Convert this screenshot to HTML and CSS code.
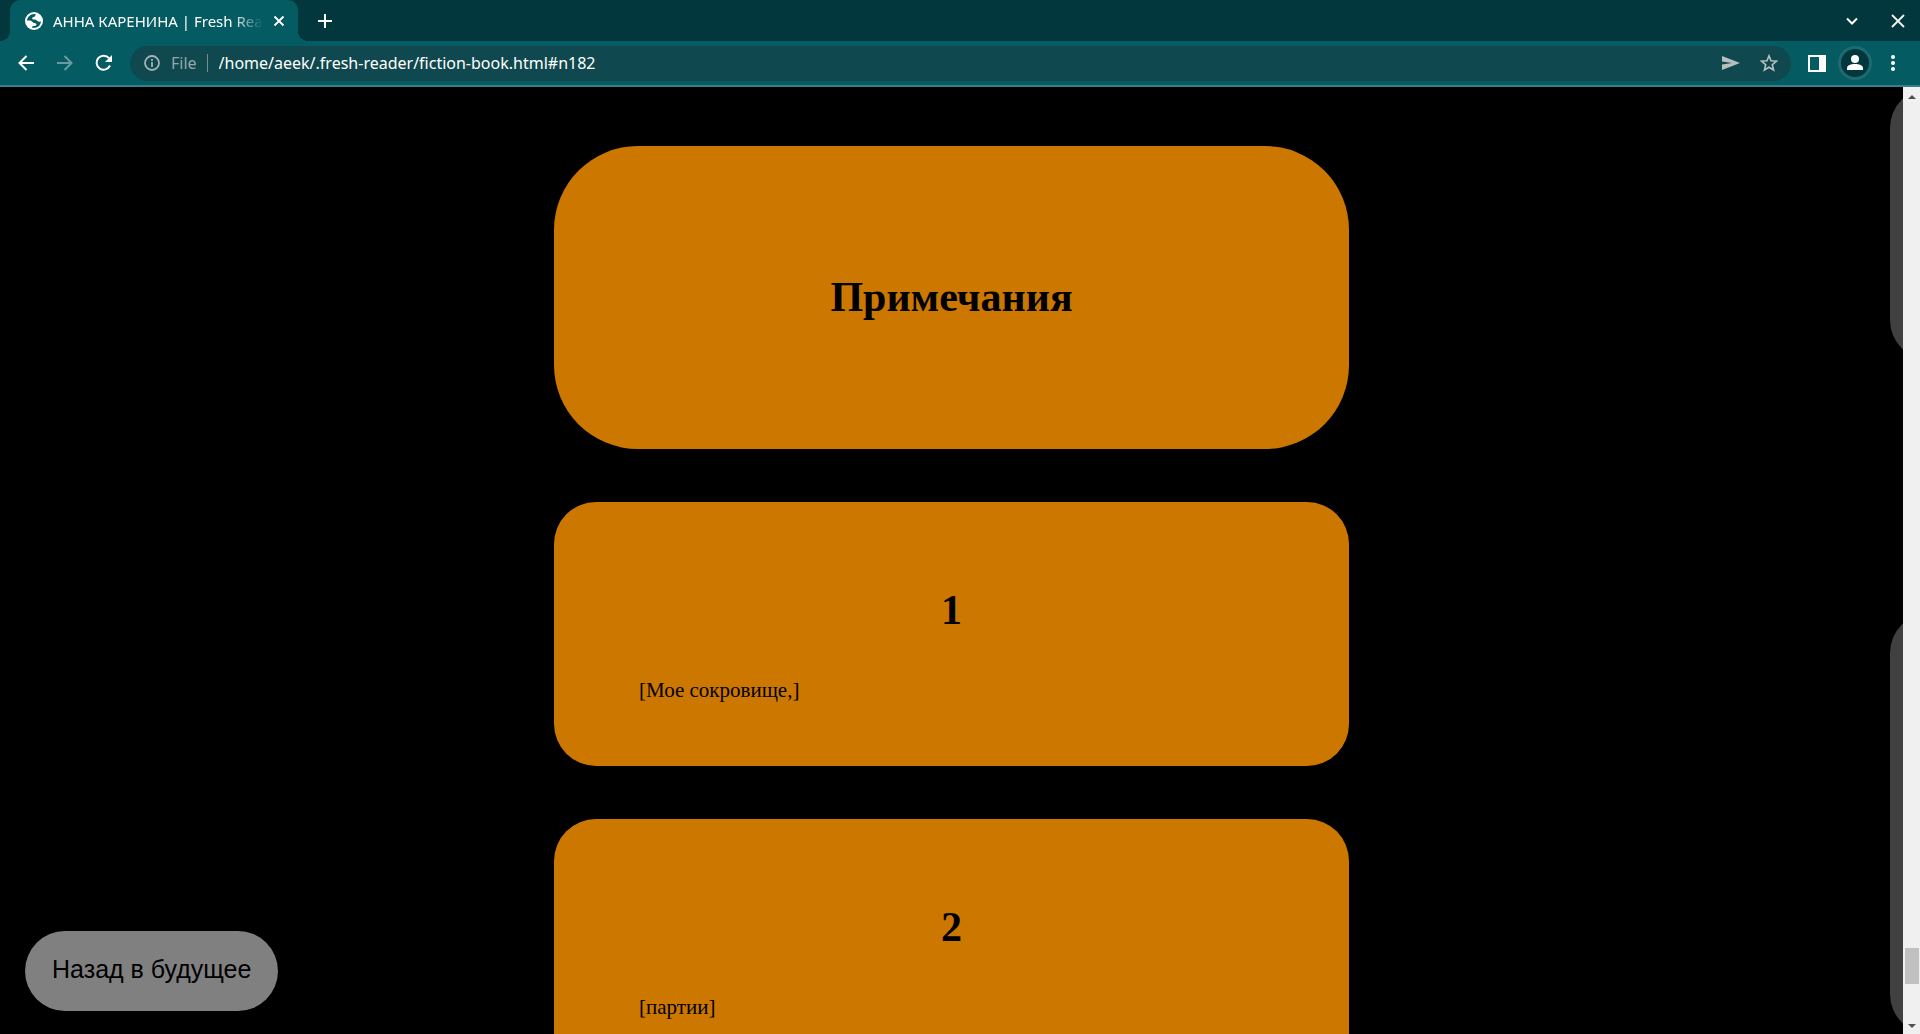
FILE: index.html
```html
<!DOCTYPE html>
<html lang="ru">
<head>
<meta charset="utf-8">
<title>АННА КАРЕНИНА | Fresh Reader</title>
<link rel="stylesheet" href="styles.css">
</head>
<body class="browser">
<header class="chrome">
  <div class="tabstrip">
    <div class="tab">
      <svg class="favicon" width="20" height="20" viewBox="0 0 20 20"><circle cx="10" cy="10" r="9" fill="#fff"/><path d="M11.500 3C7 2.500 3.500 5.500 3 9.500h3c1.500 0 2 1 3 2s3.500.5 3.500 2-1.500 1.500-4 1.700L8 16.800c4.500.8 8.700-2 9-6.300-1.500.5-3 .3-3.800-.7S11 8.500 9.500 8.500 7.500 6.800 9 6.300s2.700-1 2.500-3.300z" fill="#055b62"/></svg>
      <span class="tab-title">АННА КАРЕНИНА | Fresh Reader</span>
      <button class="icon-button tab-close" aria-label="Закрыть вкладку"><svg width="12" height="12" viewBox="0 0 12 12"><path d="M1.500 1.500l9 9m0-9l-9 9" stroke="#fff" stroke-width="1.800"/></svg></button>
    </div>
    <button class="icon-button new-tab" aria-label="Новая вкладка"><svg width="14" height="14" viewBox="0 0 14 14"><path d="M7 0v14M0 7h14" stroke="#fff" stroke-width="2"/></svg></button>
    <div class="window-controls">
      <button class="icon-button" aria-label="Поиск вкладок"><svg width="14" height="14" viewBox="0 0 14 14"><path d="M2 4.500l5 5 5-5" fill="none" stroke="#fff" stroke-width="2"/></svg></button>
      <button class="icon-button" aria-label="Закрыть окно"><svg width="14" height="14" viewBox="0 0 14 14"><path d="M1 1l12 12M13 1L1 13" stroke="#f4f4f0" stroke-width="1.800"/></svg></button>
    </div>
  </div>
  <div class="toolbar">
    <button class="icon-button nav-button" aria-label="Назад"><svg width="16" height="16" viewBox="0 0 16 16"><path d="M16 8H2M8.500 1L1.500 8l7 7" fill="none" stroke="#fff" stroke-width="2"/></svg></button>
    <button class="icon-button nav-button" aria-label="Вперёд"><svg width="16" height="16" viewBox="0 0 16 16"><path d="M0 8h14M7.500 1l7 7-7 7" fill="none" stroke="#6b9ba0" stroke-width="2"/></svg></button>
    <button class="icon-button nav-button" aria-label="Обновить"><svg width="18" height="18" viewBox="0 0 18 18"><path d="M15 11.500A7 7 0 1 1 14 4.200" fill="none" stroke="#fff" stroke-width="2"/><path d="M17 1v7h-7z" fill="#fff"/></svg></button>
    <div class="omnibox">
      <svg width="16" height="16" viewBox="0 0 16 16"><circle cx="8" cy="8" r="7" fill="none" stroke="#a3b2b5" stroke-width="1.800"/><path d="M8 7v5M8 4v2" stroke="#a3b2b5" stroke-width="1.800"/></svg>
      <label class="scheme" for="address">File</label>
      <input class="address" id="address" type="text" value="/home/aeek/.fresh-reader/fiction-book.html#n182">
      <button class="icon-button" aria-label="Отправить"><svg width="18" height="16" viewBox="0 0 18 16"><path d="M0 1l18 7-18 7V9.500L10 8 0 6.500z" fill="#b9bfbd"/></svg></button>
      <button class="icon-button" aria-label="В закладки"><svg width="18" height="18" viewBox="0 0 18 18"><path d="M9 1.800l2 5 5.400.4-4.100 3.500 1.300 5.300L9 13.200 4.400 16l1.300-5.300-4.100-3.500L7 6.800z" fill="none" stroke="#b9bfbd" stroke-width="1.600"/></svg></button>
    </div>
    <button class="icon-button side-panel" aria-label="Боковая панель"><svg width="18" height="18" viewBox="0 0 18 18"><path fill-rule="evenodd" d="M0 1h18v17H0zM2 3v13h9V3z" fill="#fff"/></svg></button>
    <button class="icon-button profile" aria-label="Профиль"><svg width="18" height="18" viewBox="0 0 18 18"><circle cx="9" cy="5" r="4" fill="#fff"/><path d="M1 16v-2c0-2.600 4-4 8-4s8 1.400 8 4v2z" fill="#fff"/></svg></button>
    <button class="icon-button menu" aria-label="Меню"><svg width="4" height="16" viewBox="0 0 4 16"><g fill="#fff"><circle cx="2" cy="2" r="2"/><circle cx="2" cy="8" r="2"/><circle cx="2" cy="14" r="2"/></g></svg></button>
  </div>
</header>
<div class="viewport">
  <main class="page">
    <section class="card card-title"><h1 class="heading">Примечания</h1></section>
    <section class="card"><h2 class="heading">1</h2><p class="note">[Мое сокровище,]</p></section>
    <section class="card"><h2 class="heading">2</h2><p class="note">[партии]</p></section>
    <div class="edge-panel edge-top"></div>
    <div class="edge-panel edge-bottom"></div>
    <a class="back-link" href="#back">Назад в будущее</a>
  </main>
  <div class="scrollbar">
    <svg width="8" height="4" viewBox="0 0 8 4"><path d="M0 4l4-4 4 4z" fill="#505050"/></svg>
    <div class="track"><div class="thumb"></div></div>
    <svg width="8" height="4" viewBox="0 0 8 4"><path d="M0 0l4 4 4-4z" fill="#505050"/></svg>
  </div>
</div>
</body>
</html>
```
FILE: styles.css
```css
* { box-sizing: border-box; }
.browser {
  margin: 0;
  height: 100vh;
  display: flex;
  flex-direction: column;
  overflow: hidden;
  background: #000;
  font-family: "Noto Sans", sans-serif;
}
.icon-button {
  display: flex;
  align-items: center;
  justify-content: center;
  padding: 0;
  border: 0;
  background: none;
}
.tabstrip {
  display: flex;
  align-items: center;
  height: 41px;
  padding: 0 15px 0 10px;
  background: #02383d;
}
.tab {
  position: relative;
  display: flex;
  align-items: center;
  width: 288px;
  height: 41px;
  padding: 0 13px 0 14px;
  border-radius: 10px 10px 0 0;
  background: #055b62;
}
.tab::before, .tab::after {
  content: "";
  position: absolute;
  bottom: 0;
  width: 10px;
  height: 10px;
}
.tab::before { right: 100%; background: radial-gradient(circle at 0 0, transparent 10px, #055b62 10px); }
.tab::after { left: 100%; background: radial-gradient(circle at 100% 0, transparent 10px, #055b62 10px); }
.favicon { flex: none; }
.tab-title {
  flex: 1;
  margin: 0 10px 0 9px;
  overflow: hidden;
  white-space: nowrap;
  font-size: 15px;
  color: #fff;
  -webkit-mask-image: linear-gradient(90deg, #000 85%, transparent);
  mask-image: linear-gradient(90deg, #000 85%, transparent);
}
.new-tab { width: 34px; margin-left: 10px; }
.window-controls { display: flex; gap: 32px; margin-left: auto; }
.toolbar {
  display: flex;
  align-items: center;
  height: 46px;
  padding: 0 25px 0 6px;
  border-bottom: 2px solid #3a7f85;
  background: #055b62;
}
.nav-button { width: 39px; }
.omnibox {
  flex: 1;
  display: flex;
  align-items: center;
  height: 35px;
  margin-left: 7px;
  padding: 0 13px 0 14px;
  border-radius: 18px;
  background: #0f484e;
}
.omnibox .icon-button { margin-left: 20px; }
.scheme {
  margin-left: 11px;
  padding-right: 10px;
  border-right: 1px solid #6f9196;
  font-size: 16px;
  line-height: 18px;
  color: #93a8ab;
}
.address {
  flex: 1;
  min-width: 0;
  margin-left: 11px;
  padding: 0;
  border: 0;
  outline: 0;
  background: none;
  font: 16px "Noto Sans", sans-serif;
  color: #fff;
}
.side-panel { margin-left: 17px; }
.profile {
  width: 34px;
  height: 34px;
  margin: 0 19px 0 12px;
  border: 3px solid #1f6a71;
  border-radius: 50%;
  background: #02383d;
}
.viewport {
  flex: 1;
  min-height: 0;
  display: flex;
}
.page {
  position: relative;
  flex: 1;
  display: flex;
  flex-direction: column;
  align-items: center;
  gap: 53px;
  padding-top: 59px;
  overflow: hidden;
  font-family: "Liberation Serif", serif;
  color: #000;
}
.card {
  flex: none;
  width: 795px;
  max-width: 100%;
  padding: 84px 85px 63px;
  border-radius: 42px;
  background: #cc7700;
}
.card-title {
  padding: 127px 85px 128px;
  border-radius: 84px;
}
.heading {
  margin: 0;
  font-size: 42px;
  line-height: 48px;
  text-align: center;
}
.note {
  margin: 43px 0 0;
  font-size: 21px;
  line-height: 26px;
}
.edge-panel {
  position: absolute;
  right: -67px;
  width: 80px;
  border-radius: 40px;
  background: #404040;
}
.edge-top { top: 1px; height: 272px; }
.edge-bottom { top: 526px; bottom: 0; }
.back-link {
  position: absolute;
  left: 25px;
  bottom: 23px;
  padding: 0 27px 4px;
  border-radius: 40px;
  background: #808080;
  font-family: "Liberation Sans", sans-serif;
  font-size: 25px;
  line-height: 76px;
  color: #000;
  text-decoration: none;
}
.scrollbar {
  display: flex;
  flex-direction: column;
  align-items: center;
  width: 17px;
  padding: 8px 0 6px;
  background: #f0f0f0;
}
.track {
  flex: 1;
  display: flex;
  flex-direction: column;
  justify-content: flex-end;
  padding-bottom: 40px;
}
.thumb {
  width: 14px;
  height: 36px;
  background: #c1c1c1;
}
```
